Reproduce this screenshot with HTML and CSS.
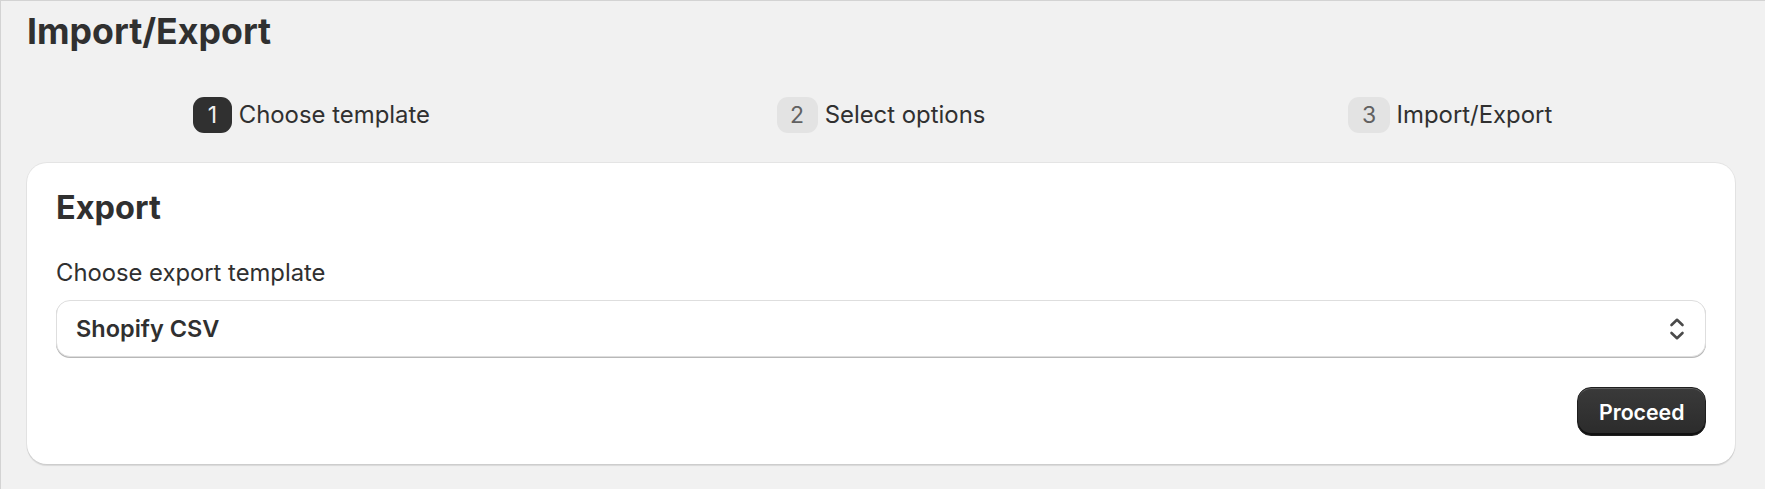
FILE: index.html
```html
<!DOCTYPE html>
<html lang="en">
<head>
<meta charset="utf-8">
<title>Import/Export</title>
<link rel="stylesheet" href="styles.css">
</head>
<body>
<div class="page">
  <h1 class="page-title">Import/Export</h1>
  <ol class="steps">
    <li class="step step-active"><span class="step-num">1</span><span class="step-label">Choose template</span></li>
    <li class="step"><span class="step-num">2</span><span class="step-label">Select options</span></li>
    <li class="step"><span class="step-num">3</span><span class="step-label">Import/Export</span></li>
  </ol>
  <section class="card">
    <h2 class="card-title">Export</h2>
    <label class="field-label" for="tpl">Choose export template</label>
    <div class="select">
      <span class="select-value">Shopify CSV</span>
      <svg class="select-icon" width="18" height="26" viewBox="0 0 18 26" aria-hidden="true">
        <path d="M3.5 9 L9 3.8 L14.5 9" fill="none" stroke="#4a4a4a" stroke-width="2.6" stroke-linecap="round" stroke-linejoin="round"/>
        <path d="M3.5 17 L9 22.2 L14.5 17" fill="none" stroke="#4a4a4a" stroke-width="2.6" stroke-linecap="round" stroke-linejoin="round"/>
      </svg>
    </div>
    <div class="card-footer">
      <button class="btn-primary" type="button">Proceed</button>
    </div>
  </section>
</div>
</body>
</html>
```

FILE: styles.css
```css
html, body {
  margin: 0;
  padding: 0;
}

body {
  background: #f1f1f1;
  font-family: Inter, "Noto Sans", "Liberation Sans", sans-serif;
  color: #303030;
}

.page {
  box-sizing: border-box;
  min-height: 489px;
  border-top: 1px solid #d3d3d3;
  border-left: 1px solid #d3d3d3;
  padding: 9px 30px 0 26px;
}

.page-title {
  margin: 0;
  font-size: 35.7px;
  line-height: 43px;
  font-weight: 700;
  letter-spacing: 0;
  color: #303030;
}

.steps {
  list-style: none;
  margin: 0;
  padding: 44px 0 30px;
  display: grid;
  grid-template-columns: repeat(3, 1fr);
}

.step {
  display: flex;
  align-items: center;
  justify-content: center;
  gap: 7px;
}

.step-num {
  display: flex;
  align-items: center;
  justify-content: center;
  height: 36px;
  padding: 0 13.5px;
  border-radius: 11px;
  background: #e3e3e3;
  color: #616161;
  font-size: 23px;
  line-height: 36px;
}

.step-active .step-num {
  background: #303030;
  color: #f1f1f1;
  padding: 0 14.5px;
}

.step-label {
  font-size: 23.9px;
  line-height: 36px;
  color: #303030;
}

.card {
  background: #ffffff;
  border-radius: 20px;
  padding: 29px 29px 28px;
  box-shadow: 0 0 0 1px rgba(0, 0, 0, 0.05), 0 2px 1px rgba(0, 0, 0, 0.1);
}

.card-title {
  margin: 0 0 31px;
  font-size: 32.5px;
  line-height: 32px;
  font-weight: 700;
  letter-spacing: 0;
  color: #303030;
}

.field-label {
  display: block;
  margin-bottom: 9px;
  font-size: 23.8px;
  line-height: 36px;
  color: #303030;
}

.select {
  box-sizing: border-box;
  height: 57px;
  display: flex;
  align-items: center;
  justify-content: space-between;
  padding: 0 19px 0 19px;
  border: 1px solid #dedede;
  border-radius: 14px;
  box-shadow: 0 1px 0 #b8b8b8;
  background: #ffffff;
}

.select-value {
  font-size: 23.5px;
  font-weight: 600;
  color: #303030;
}

.select-icon {
  display: block;
}

.card-footer {
  display: flex;
  justify-content: flex-end;
  margin-top: 30px;
}

.btn-primary {
  box-sizing: border-box;
  height: 49px;
  padding: 0 20.5px;
  border: 1px solid #1f1f1f;
  border-radius: 14px;
  background: linear-gradient(#3a3a3a, #2b2b2b);
  box-shadow: inset 0 1px 0 rgba(255, 255, 255, 0.18), inset 0 -2px 0 rgba(0, 0, 0, 0.6);
  color: #ffffff;
  font-family: Inter, "Noto Sans", "Liberation Sans", sans-serif;
  font-size: 21.3px;
  font-weight: 600;
  cursor: pointer;
}
```
